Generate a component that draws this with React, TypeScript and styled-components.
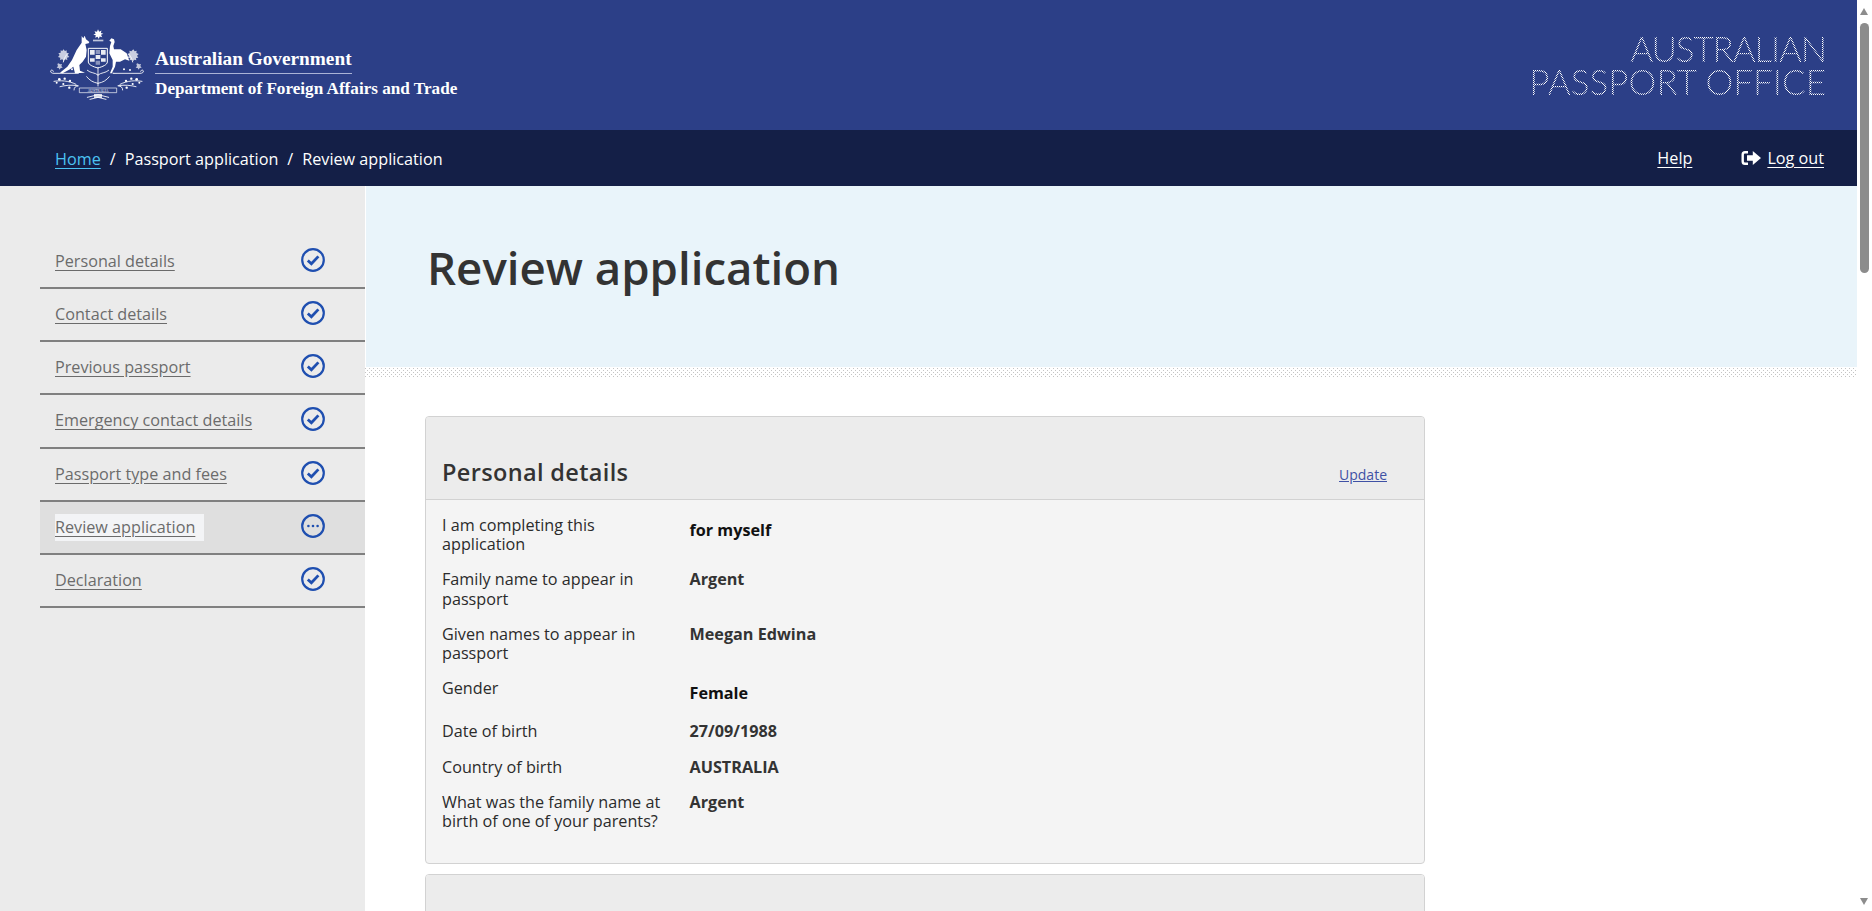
import React from "react";
import styled, { createGlobalStyle } from "styled-components";

const Global = createGlobalStyle`
  html { background: #fff; }
  body { margin: 0; font-family: "Open Sans", "Liberation Sans", sans-serif; color: #2f2f2f; }
`;

const Page = styled.div`
  padding-right: 15px;
`;
const ScrollTrack = styled.div`
  position: fixed;
  top: 0;
  right: 0;
  bottom: 0;
  width: 15px;
  background: #fff;
`;
const ScrollThumb = styled.div`
  position: absolute;
  top: 23px;
  left: 3px;
  width: 9px;
  height: 250px;
  border-radius: 5px;
  background: #8c8c8c;
`;
const ScrollArrow = styled.div<{ $down?: boolean }>`
  position: absolute;
  left: 3px;
  width: 0;
  height: 0;
  border-left: 4.5px solid transparent;
  border-right: 4.5px solid transparent;
  ${p =>
    p.$down
      ? "bottom: 6px; border-top: 7px solid #8c8c8c;"
      : "top: 8px; border-bottom: 7px solid #8c8c8c;"}
`;

const Masthead = styled.header`
  height: 130px;
  background: #2c3f87;
  display: flex;
  justify-content: space-between;
  padding: 28px 31px 0 48px;
  box-sizing: border-box;
`;
const Brand = styled.div`
  display: flex;
  align-items: flex-start;
  gap: 5px;
`;
const Crest = styled.svg`
  width: 102px;
  height: 72px;
  display: block;
`;
const BrandText = styled.div`
  display: flex;
  flex-direction: column;
  margin-top: 19px;
  color: #fff;
  font-family: "Liberation Serif", "Times New Roman", serif;
  font-weight: 700;
  white-space: nowrap;
`;
const Gov = styled.span`
  font-size: 19.3px;
  line-height: 24px;
  width: 197px;
  padding-bottom: 2px;
  border-bottom: 1px solid #aab3d6;
`;
const Dept = styled.span`
  font-size: 17.15px;
  line-height: 20px;
  margin-top: 5px;
`;
const Office = styled.div`
  font-family: "Lato", "Roboto", "Liberation Sans", sans-serif;
  font-weight: 300;
  font-size: 35.1px;
  line-height: 33px;
  margin-top: 4px;
  text-align: right;
  white-space: nowrap;
  color: transparent;
  background-image:
    radial-gradient(circle at 0.5px 0.5px, #fff 0.5px, transparent 0.5px),
    radial-gradient(circle at 0.5px 0.5px, #fff 0.5px, transparent 0.5px);
  background-size: 2px 2px;
  background-position: 0 0, 1px 1px;
  -webkit-background-clip: text;
  background-clip: text;
`;
const OfficeLine = styled.span<{ $tight?: boolean }>`
  display: block;
  letter-spacing: ${p => (p.$tight ? "-1.2px" : "0")};
`;
const NavBar = styled.nav`
  height: 56px;
  background: #141f47;
  display: flex;
  align-items: center;
  justify-content: space-between;
  padding: 0 33px 0 55px;
  color: #fff;
  font-size: 16.2px;
`;
const Crumbs = styled.div`
  display: flex;
  align-items: center;
  gap: 9px;
  margin-top: 2px;
`;
const HomeLink = styled.a`
  color: #4cc3f2;
  text-decoration: underline;
  text-underline-offset: 3px;
`;
const NavLinks = styled.div`
  display: flex;
  align-items: center;
`;
const NavLink = styled.a`
  color: #fff;
  text-decoration: underline;
  text-underline-offset: 3px;
`;
const LogOut = styled.span`
  display: flex;
  align-items: center;
  gap: 6px;
  margin-left: 49px;
`;
const LogOutIcon = styled.svg`
  width: 20px;
  height: 16px;
  display: block;
`;
const Layout = styled.div`
  display: flex;
  align-items: stretch;
`;
const Sidebar = styled.aside`
  width: 365px;
  flex: none;
  background: #ebebeb;
  padding: 50px 0 0 40px;
  box-sizing: border-box;
`;
const StepList = styled.ul`
  list-style: none;
  margin: 0;
  padding: 0;
`;
const Step = styled.li<{ $active?: boolean }>`
  height: 53.15px;
  box-sizing: border-box;
  border-bottom: 2px solid #808080;
  background: ${p => (p.$active ? "#dfdfdf" : "transparent")};
  position: relative;
  display: flex;
  align-items: center;
  padding: 0 0 0 15px;
`;
const StepLink = styled.a<{ $active?: boolean }>`
  color: #6b6b6b;
  font-size: 16.2px;
  line-height: 27px;
  text-decoration: underline;
  text-underline-offset: 3px;
  background: ${p => (p.$active ? "#f3f4f6" : "transparent")};
  padding-right: ${p => (p.$active ? "9px" : "0")};
`;
const StepIcon = styled.svg`
  position: absolute;
  left: 261px;
  top: 12px;
  width: 24px;
  height: 24px;
`;
const Main = styled.main`
  flex: 1;
  min-width: 0;
`;
const Hero = styled.div`
  margin-left: 1px;
  height: 181px;
  background: #e9f4fa;
  display: flex;
  padding: 43px 0 0 61px;
  box-sizing: border-box;
`;
const Title = styled.h1`
  margin: 0;
  font-size: 45.6px;
  font-weight: 600;
  line-height: 77px;
  color: #333;
`;
const DotBand = styled.div`
  height: 10px;
  background-image:
    radial-gradient(circle at 0.5px 0.5px, #c4c4c4 0.5px, transparent 0.5px),
    radial-gradient(circle at 0.5px 0.5px, #c4c4c4 0.5px, transparent 0.5px);
  background-size: 4px 4px;
  background-position: 0 1px, 2px 3px;
`;
const Content = styled.div`
  width: 1000px;
  margin-left: 60px;
  padding: 39px 0 60px;
  display: flex;
  flex-direction: column;
  gap: 10px;
`;
const Card = styled.section`
  border: 1px solid #d2d2d2;
  border-radius: 4px;
  background: #f4f4f4;
  overflow: hidden;
`;
const CardHead = styled.div`
  height: 83px;
  box-sizing: border-box;
  background: #ececec;
  border-bottom: 1px solid #d2d2d2;
  display: flex;
  align-items: flex-end;
  justify-content: space-between;
  padding: 0 37px 11px 16px;
`;
const CardTitle = styled.h2`
  margin: 0;
  font-size: 23.5px;
  font-weight: 600;
  line-height: 32px;
  letter-spacing: 0.35px;
  color: #333;
`;
const Update = styled.a`
  font-size: 14px;
  color: #3f51a5;
  text-decoration: underline;
  line-height: 18px;
  margin-bottom: 4px;
`;
const CardBody = styled.dl`
  margin: 0;
  padding: 16px 16px 32px;
  display: flex;
  flex-direction: column;
  gap: 16px;
`;
const Row = styled.div`
  display: grid;
  grid-template-columns: 247.5px 1fr;
  align-items: start;
`;
const Label = styled.dt`
  margin: 0;
  font-size: 16.2px;
  line-height: 19.2px;
  width: 225px;
  color: #2b2b2b;
`;
const Value = styled.dd<{ $dark?: boolean }>`
  margin: 0;
  font-size: 16.2px;
  line-height: 19.2px;
  font-weight: 700;
  color: ${p => (p.$dark ? "#111" : "#333")};
  padding: ${p => (p.$dark ? "5px 0 3px" : "0")};
`;

const Check = () => (
  <StepIcon viewBox="0 0 24 24" fill="none" stroke="#1f4fb0">
    <circle cx="12" cy="12" r="10.8" strokeWidth="2.2" />
    <path d="M6.8 12.4l3.6 3.4 7-7.4" strokeWidth="2.8" />
  </StepIcon>
);
const Pending = () => (
  <StepIcon viewBox="0 0 24 24" fill="none" stroke="#1f4fb0">
    <circle cx="12" cy="12" r="10.8" strokeWidth="2.2" />
    <g fill="#1f4fb0" stroke="none">
      <circle cx="7.4" cy="12" r="1.3" />
      <circle cx="12" cy="12" r="1.3" />
      <circle cx="16.6" cy="12" r="1.3" />
    </g>
  </StepIcon>
);

const CoatOfArms = () => (
  <Crest viewBox="54 24 306 216" fill="#fff">
    {/* star and wreath */}
    <path d="M204 28l3.500 7 7-3.500-2 7.500 7.500 2-7 3.500 3.500 7-7.500-2-2.500 7.500-4-7-7 3.500 2-7.500-7.500-2 7-3.500-3.500-7 7.500 2z" />
    <rect x="189" y="59" width="31" height="5" opacity="0.7" />
    {/* kangaroo */}
    <path d="M155 48l5 7 4-8 4 11 10 8-2 4-10 2 4 18-2 20-10 15-10 10 2 17 15 6-30 2-5-20-10 8-22 12-8-2 22-18 14-20 14-30 15-22z" />
    {/* emu */}
    <path d="M238 62l6-7 8 3 2 8-4 12 2 10h20l18 12 8 22-13-4-15 7h-12l-3 15-9 18 16 2h-22l8-20v-20l-10-20 2-22 4-12z" />
    {/* shield */}
    <path d="M175 85h57v41c0 8-14 14-28.500 18-14.500-4-28.500-10-28.500-18z" fill="none" stroke="#fff" strokeWidth="3" />
    <path d="M180 90h14v14h-14zM213 90h14v14h-14zM180 115h14v10h-14zM213 115h14v10h-14zM197 105h14v12h-14z" opacity="0.9" />
    <path d="M197 90h13v12h-13zM197 122h13v12h-13z" opacity="0.45" />
    {/* ground scroll and branches */}
    <g fill="none" stroke="#fff" strokeWidth="2.600" strokeLinecap="round">
      <path d="M145 160H72c-7 0-11-3-10-7 1-4 7-4 8 1" />
      <path d="M250 160h80c7 0 11-3 10-7-1-4-7-4-8 1" />
      <path d="M204 142v56M204 165c-9-8-22-5-32-14M204 165c9-8 22-5 32-14M204 190c-16-3-25-9-34-20M204 190c16-3 25-9 34-20" />
      <path d="M72 184c20-3 42-3 66 9M336 184c-20-3-42-3-66 9" />
      <path d="M90 200c16-4 32-6 54-3M318 200c-16-4-32-6-54-3" />
      <path d="M132 210c0-9 6-12 12-12M278 210c0-9-6-12-12-12" />
      <path d="M172 232l32-8 32 8M180 238l24-6 24 6" />
      <path d="M100 126c2-8 4-14 10-22M308 126c-2-8-4-14-10-22" />
    </g>
    {/* wattle sprigs */}
    <g>
      <path d="M100 88l5 5 5-2 0 7 7 2-4 5 5 6-7 2 1 7-7-2-4 6-4-6-7 2 1-7-7-2 5-6-4-5 7-2 0-7 5 2z" opacity="0.75" />
      <path d="M310 88l4 6 6-2-1 7 7 3-5 5 4 6-7 1 1 7-6-2-4 5-3-5-7 2 1-7-7-1 4-6-5-5 7-3-1-7 6 2z" opacity="0.75" />
      <path d="M85 130l6 3 5-1-2 6 4 5-6 1-3 5-3-5-6-1 4-5-2-6zM322 130l6 3 5-1-2 6 4 5-6 1-3 5-3-5-6-1 4-5-2-6z" opacity="0.7" />
      <circle cx="88" cy="178" r="4" /><circle cx="104" cy="176" r="3.500" /><circle cx="120" cy="183" r="3.500" />
      <circle cx="100" cy="192" r="3.200" /><circle cx="80" cy="188" r="3" /><circle cx="118" cy="203" r="3.500" />
      <circle cx="320" cy="178" r="4" /><circle cx="304" cy="176" r="3.500" /><circle cx="288" cy="183" r="3.500" />
      <circle cx="308" cy="192" r="3.200" /><circle cx="328" cy="188" r="3" /><circle cx="290" cy="203" r="3.500" />
      <circle cx="300" cy="150" r="3" /><circle cx="282" cy="148" r="3" /><circle cx="108" cy="150" r="3" /><circle cx="126" cy="148" r="3" />
    </g>
    {/* motto banner */}
    <path d="M148 204h112v14H148z" fill="none" stroke="#fff" strokeWidth="2" />
    <text x="204" y="215" fontFamily="Liberation Serif, serif" fontSize="11" textAnchor="middle" fill="#fff">AUSTRALIA</text>
    <path d="M192 222h24v12h-24z" opacity="0.8" />
  </Crest>
);

const steps = [
  "Personal details",
  "Contact details",
  "Previous passport",
  "Emergency contact details",
  "Passport type and fees",
  "Review application",
  "Declaration",
];

const personal: { label: string; value: string; dark?: boolean }[] = [
  { label: "I am completing this application", value: "for myself", dark: true },
  { label: "Family name to appear in passport", value: "Argent" },
  { label: "Given names to appear in passport", value: "Meegan Edwina" },
  { label: "Gender", value: "Female", dark: true },
  { label: "Date of birth", value: "27/09/1988" },
  { label: "Country of birth", value: "AUSTRALIA" },
  { label: "What was the family name at birth of one of your parents?", value: "Argent" },
];

export default function App() {
  return (
    <Page>
      <Global />
      <Masthead>
        <Brand>
          <CoatOfArms />
          <BrandText>
            <Gov>Australian Government</Gov>
            <Dept>Department of Foreign Affairs and Trade</Dept>
          </BrandText>
        </Brand>
        <Office>
          <OfficeLine $tight>AUSTRALIAN</OfficeLine>
          <OfficeLine>PASSPORT OFFICE</OfficeLine>
        </Office>
      </Masthead>
      <NavBar>
        <Crumbs>
          <HomeLink href="#">Home</HomeLink>
          <span>/</span>
          <span>Passport application</span>
          <span>/</span>
          <span>Review application</span>
        </Crumbs>
        <NavLinks>
          <NavLink href="#">Help</NavLink>
          <LogOut>
            <LogOutIcon viewBox="0 0 20 16" fill="#fff">
              <path d="M7 2.200H4a2.300 2.300 0 0 0-2.300 2.300v7A2.300 2.300 0 0 0 4 13.800h3" fill="none" stroke="#fff" strokeWidth="2.400" />
              <path d="M6 5.200h5.800V1L20 8l-8.200 7v-4.200H6z" />
            </LogOutIcon>
            <NavLink href="#">Log out</NavLink>
          </LogOut>
        </NavLinks>
      </NavBar>
      <Layout>
        <Sidebar>
          <StepList>
            {steps.map(s => {
              const active = s === "Review application";
              return (
                <Step key={s} $active={active}>
                  <StepLink href="#" $active={active}>{s}</StepLink>
                  {active ? <Pending /> : <Check />}
                </Step>
              );
            })}
          </StepList>
        </Sidebar>
        <Main>
          <Hero>
            <Title>Review application</Title>
          </Hero>
          <DotBand />
          <Content>
            <Card>
              <CardHead>
                <CardTitle>Personal details</CardTitle>
                <Update href="#">Update</Update>
              </CardHead>
              <CardBody>
                {personal.map(r => (
                  <Row key={r.label}>
                    <Label>{r.label}</Label>
                    <Value $dark={r.dark}>{r.value}</Value>
                  </Row>
                ))}
              </CardBody>
            </Card>
            <Card>
              <CardHead />
            </Card>
          </Content>
        </Main>
      </Layout>
      <ScrollTrack>
        <ScrollArrow />
        <ScrollThumb />
        <ScrollArrow $down />
      </ScrollTrack>
    </Page>
  );
}
